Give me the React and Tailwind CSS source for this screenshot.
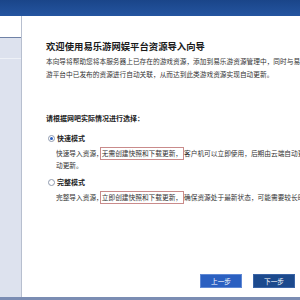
import React from 'react';

const cjk = { fontFamily: '"Noto Sans CJK SC", "Liberation Sans", sans-serif' };

const Radio = ({ checked }) => (
  <span className="w-[7px] h-[7px] rounded-full border border-[#8f9aae] bg-white flex items-center justify-center shrink-0">
    {checked && <span className="w-[3px] h-[3px] rounded-full bg-[#2a5fc0]" />}
  </span>
);

const Option = ({ checked, title, lead, boxed, rest, second }) => (
  <div>
    <div className="flex items-center gap-[2px] h-[10px] ml-[2px]">
      <Radio checked={checked} />
      <span className="font-bold text-[7px] leading-[10px] text-[#222]">{title}</span>
    </div>
    <div className="mt-[4px] ml-[10px] text-[6.7px] text-[#333] whitespace-nowrap overflow-hidden">
      <div className="h-[13px] flex items-center">
        <span>{lead}</span>
        <span className="border border-[#c98b8b] h-[13px] px-[1px] flex items-center -ml-[3px]">{boxed}</span>
        <span>{rest}</span>
      </div>
      {second && <div className="h-[11px] leading-[11px]">{second}</div>}
    </div>
  </div>
);

export default function App() {
  return (
    <div className="w-[300px] h-[300px] flex flex-col bg-white overflow-hidden" style={cjk}>
      {/* top banner */}
      <div className="h-[16px] bg-gradient-to-b from-[#1a4589] to-[#2455a0] shrink-0" />

      <div className="flex flex-1 min-h-0">
        {/* left step list */}
        <div className="w-[22px] shrink-0 bg-[#dde2ee] border-r border-[#b7bfcf] flex flex-col">
          <div className="h-[22px] bg-white border-b border-[#6f82a6]" />
          <div className="h-[21px] border-b border-[#eef1f7]" />
        </div>

        {/* main */}
        <div className="flex-1 min-w-0 flex flex-col pl-[24px]">
          <h1 className="mt-[24px] text-[9.35px] leading-[12px] font-bold text-[#1a1a1a] whitespace-nowrap">
            欢迎使用易乐游网娱平台资源导入向导
          </h1>
          <div className="mt-[3px] text-[6.7px] leading-[13px] text-[#333] whitespace-nowrap overflow-hidden">
            <div>本向导将帮助您将本服务器上已存在的游戏资源，添加到易乐游资源管理中，同时与易乐</div>
            <div>游平台中已发布的资源进行自动关联，从而达到此类游戏资源实现自动更新。</div>
          </div>

          <div className="mt-[32px] text-[7px] leading-[10px] font-bold text-[#222] whitespace-nowrap">
            请根据网吧实际情况进行选择：
          </div>

          <div className="mt-[10px]">
            <Option
              checked
              title="快速模式"
              lead="快速导入资源，"
              boxed="无需创建快照和下载更新，"
              rest="客户机可以立即使用，后期由云端自动更"
              second="动更新。"
            />
          </div>
          <div className="mt-[6px]">
            <Option
              title="完整模式"
              lead="完整导入资源，"
              boxed="立即创建快照和下载更新，"
              rest="确保资源处于最新状态，可能需要较长时"
            />
          </div>

          <div className="mt-auto mb-[9px] pr-[5px] flex justify-end gap-[11px]">
            <button className="w-[42px] h-[14px] bg-[#2b60c1] border border-[#5f88d4] text-white text-[6.7px] leading-none">
              上一步
            </button>
            <button className="w-[42px] h-[14px] bg-[#1c4a8d] border border-[#3a64a6] text-white text-[6.7px] leading-none">
              下一步
            </button>
          </div>
        </div>
      </div>

      {/* bottom edge */}
      <div className="h-[3px] bg-[#7b8db3] shrink-0" />
    </div>
  );
}
